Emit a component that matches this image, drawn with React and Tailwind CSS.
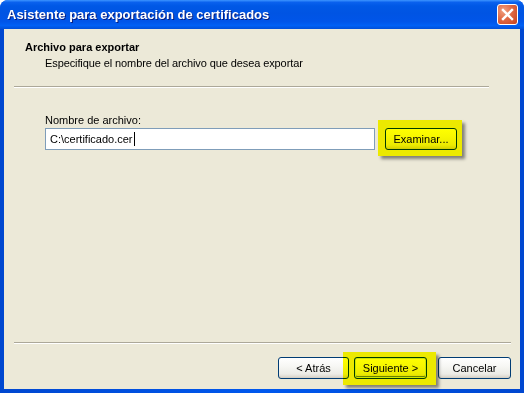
import React from "react";

const font = { fontFamily: '"Liberation Sans", Arial, sans-serif' };

function XPButton({ children, className = "", isDefault = false }) {
  return (
    <div
      className={`h-[22px] rounded-[3px] border border-[#003c74] flex items-center justify-center text-[11px] text-black ${className}`}
      style={{
        background: "linear-gradient(to bottom, #ffffff 0%, #f7f7f4 40%, #ecebe6 80%, #d6d0c5 100%)",
        boxShadow: isDefault
          ? "inset 0 0 0 1px #cee7ff, inset 0 -1px 0 1px #6982ee"
          : "inset 0 -1px 0 0 #d6d0c5",
      }}
    >
      {children}
    </div>
  );
}

export default function App() {
  return (
    <div className="w-[524px] h-[393px] bg-white overflow-hidden" style={font}>
      <div className="relative w-full h-full flex flex-col rounded-t-[8px] overflow-hidden bg-[#0054e3]">
        {/* Title bar */}
        <div
          className="h-[29px] shrink-0 flex items-center justify-between pl-[7px] pr-[6px]"
          style={{
            background:
              "linear-gradient(to bottom, #3d95ff 0%, #0a61ee 8%, #0058e6 20%, #0054e3 45%, #0055e9 75%, #0060f5 88%, #004fd8 100%)",
          }}
        >
          <span
            className="text-white font-bold text-[13px] leading-none"
            style={{ textShadow: "1px 1px 0 #0a1c7a", fontFamily: '"Liberation Sans", Arial, sans-serif' }}
          >
            Asistente para exportación de certificados
          </span>
          <div
            className="w-[21px] h-[21px] rounded-[3px] border border-white flex items-center justify-center"
            style={{ background: "radial-gradient(circle at 30% 30%, #f0a080 0%, #e06a45 45%, #c5401e 100%)" }}
          >
            <svg width="13" height="13" viewBox="0 0 13 13">
              <path d="M2 2 L11 11 M11 2 L2 11" stroke="white" strokeWidth="2.4" strokeLinecap="square" />
            </svg>
          </div>
        </div>

        {/* Body with borders */}
        <div className="flex-1 flex px-[4px] pb-[4px]" style={{ background: "linear-gradient(to right, #0047d0, #0058ee 50%, #0047d0)" }}>
          <div className="relative flex-1 flex flex-col bg-[#ece9d8] text-[11px] leading-[13px] text-black">
            {/* Header */}
            <div className="pt-[12px] pl-[21px] font-bold">Archivo para exportar</div>
            <div className="pt-[3px] pl-[41px] tracking-[-0.1px]">Especifique el nombre del archivo que desea exportar</div>
            <div className="mt-[16px] ml-[10px] mr-[31px] border-t border-[#aca899] border-b border-b-white" />

            {/* Main */}
            <div className="mt-[26px] pl-[41px]">Nombre de archivo:</div>
            <div className="mt-[1px] pl-[41px] flex items-center">
              <div className="w-[330px] h-[22px] bg-white border border-[#7f9db9] flex items-center pl-[4px]">
                <span>C:\certificado.cer</span>
                <span className="inline-block w-[1px] h-[14px] bg-black ml-[1px]" />
              </div>
              <XPButton className="ml-[10px] w-[72px]">Examinar...</XPButton>
            </div>

            <div className="flex-1" />

            <div className="ml-[10px] mr-[9px] border-t border-[#aca899] border-b border-b-white" />
            <div className="mt-[13px] mb-[10px] pr-[9px] flex justify-end">
              <XPButton className="w-[71px]">&lt; Atrás</XPButton>
              <XPButton className="ml-[5px] w-[73px]" isDefault>Siguiente &gt;</XPButton>
              <XPButton className="ml-[11px] w-[73px]">Cancelar</XPButton>
            </div>

            {/* Highlights */}
            <div
              className="absolute left-[374px] top-[91px] w-[84px] h-[36px] bg-[#ffff00] mix-blend-multiply"
              style={{ boxShadow: "3px 3px 3px rgba(0,0,0,0.45)" }}
            />
            <div
              className="absolute left-[339px] top-[323px] w-[93px] h-[33px] bg-[#ffff00] mix-blend-multiply"
              style={{ boxShadow: "3px 3px 3px rgba(0,0,0,0.45)" }}
            />
          </div>
        </div>
      </div>
    </div>
  );
}
